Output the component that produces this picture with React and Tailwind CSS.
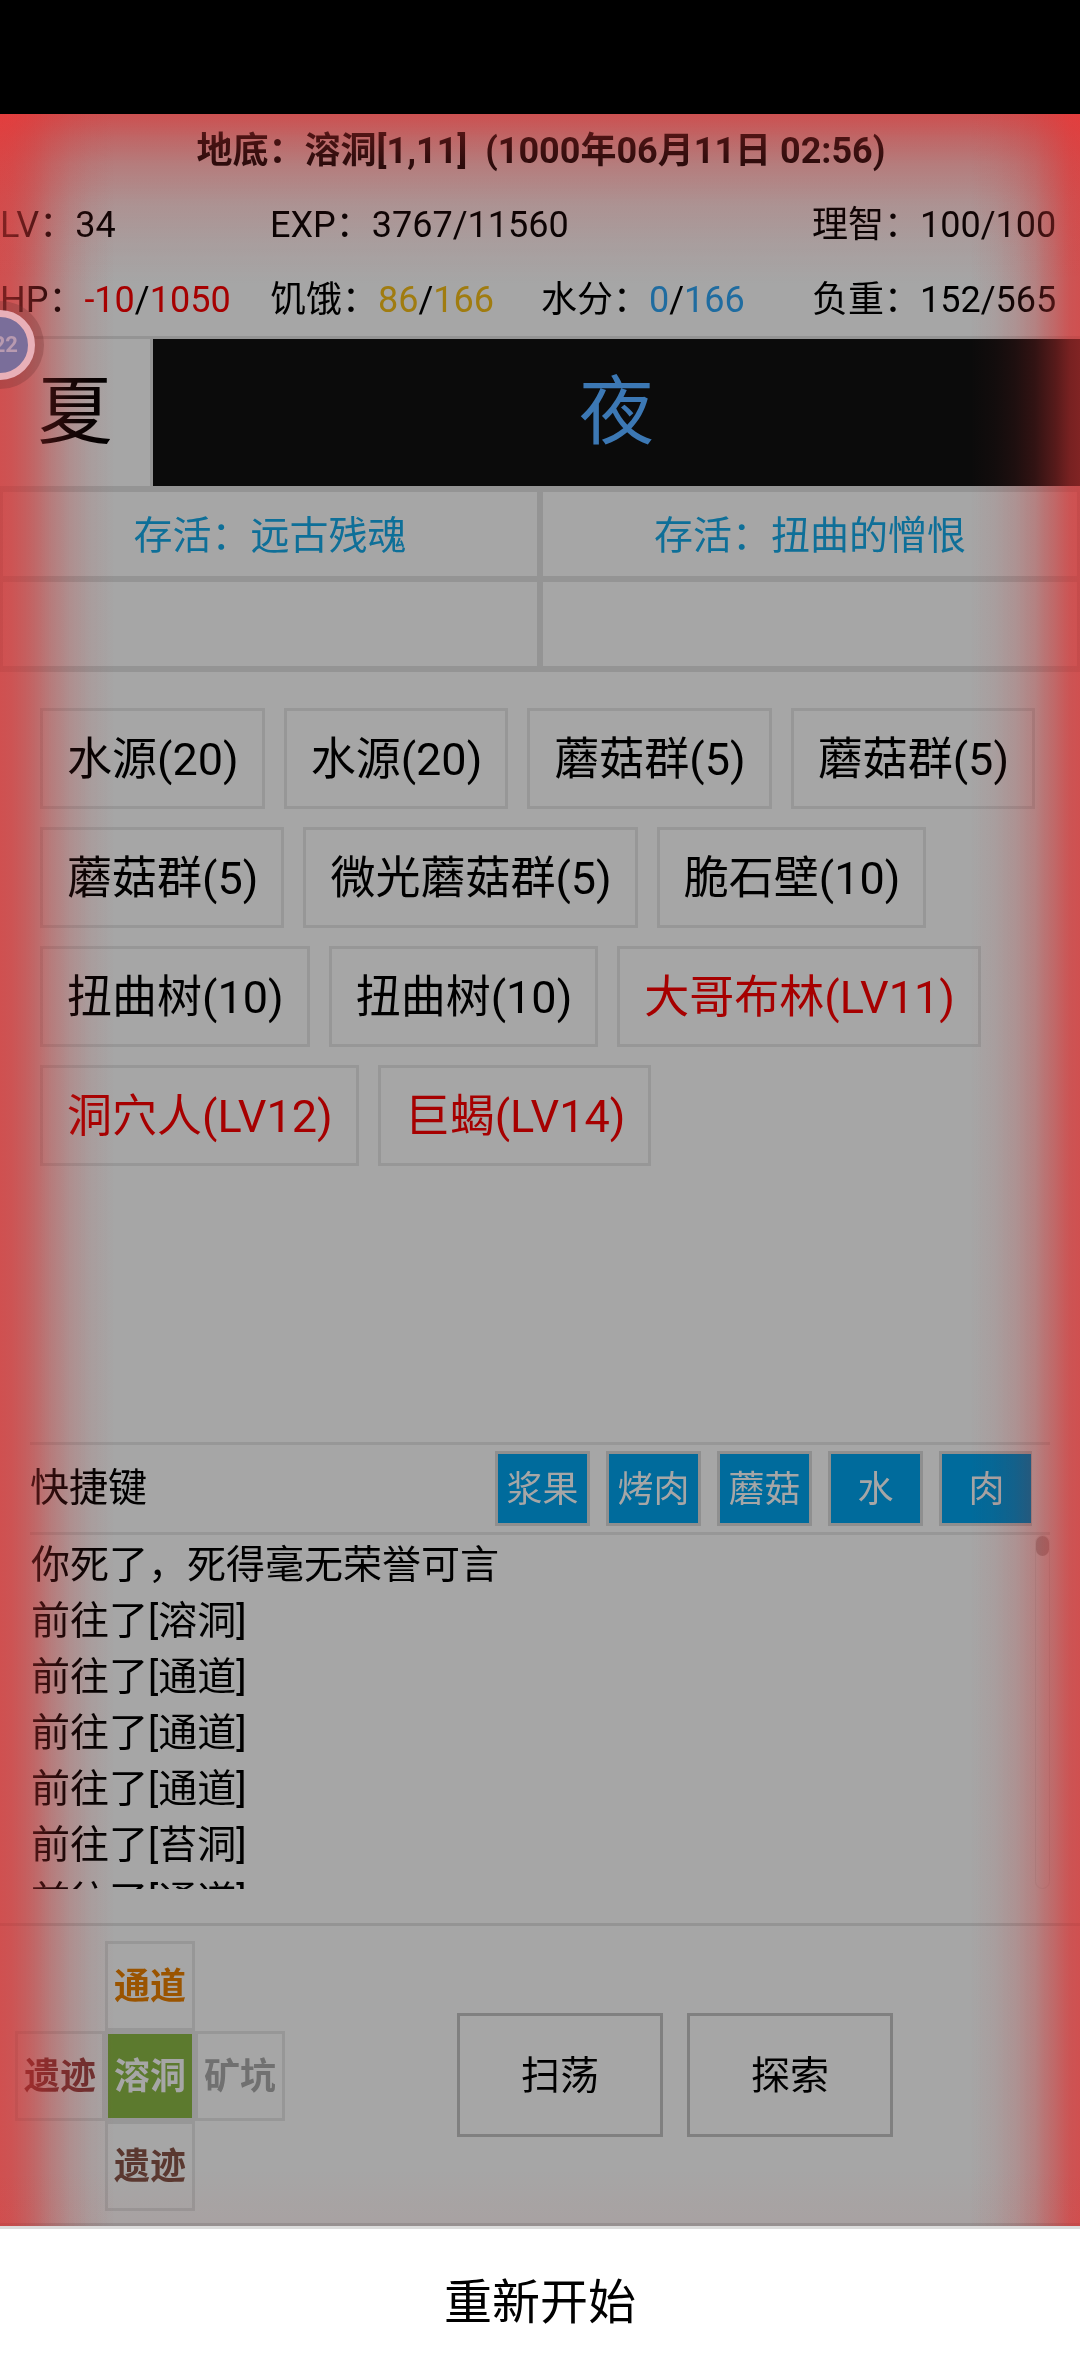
const objects = [
  { label: '水源(20)' },
  { label: '水源(20)' },
  { label: '蘑菇群(5)' },
  { label: '蘑菇群(5)' },
  { label: '蘑菇群(5)' },
  { label: '微光蘑菇群(5)' },
  { label: '脆石壁(10)' },
  { label: '扭曲树(10)' },
  { label: '扭曲树(10)' },
  { label: '大哥布林(LV11)', enemy: true },
  { label: '洞穴人(LV12)', enemy: true },
  { label: '巨蝎(LV14)', enemy: true },
];

const quickKeys = ['浆果', '烤肉', '蘑菇', '水', '肉'];

const logLines = [
  '你死了，死得毫无荣誉可言',
  '前往了[溶洞]',
  '前往了[通道]',
  '前往了[通道]',
  '前往了[通道]',
  '前往了[苔洞]',
  '前往了[通道]',
];

function StatRow({ children }) {
  return <div className="grid h-[75px] grid-cols-[270px_271px_271px_1fr] items-center whitespace-nowrap pt-[3px] text-[36px]">{children}</div>;
}

function MapCell({ className, children }) {
  return (
    <div className={`flex h-[90px] w-[90px] items-center justify-center border-[3px] border-[#979797] pt-[2px] text-[36px] font-bold ${className}`}>
      {children}
    </div>
  );
}

export default function App() {
  return (
    <div className="flex h-[2376px] w-[1080px] flex-col overflow-hidden bg-white font-['Roboto','Noto_Sans_CJK_SC',sans-serif] text-black">
      <div className="h-[114px] shrink-0 bg-black" />

      <div className="relative flex h-[2112px] shrink-0 flex-col bg-[#a6a6a6]">
        <div className="flex h-[72px] items-center justify-center whitespace-pre pl-[2px] pt-[1px] text-[36px] font-bold">
          {'地底：溶洞[1,11]  (1000年06月11日 02:56)'}
        </div>

        <StatRow>
          <span>LV：34</span>
          <span>EXP：3767/11560</span>
          <span />
          <span>理智：100/100</span>
        </StatRow>
        <StatRow>
          <span>
            HP：<span className="text-[#a60000]">-10</span>/<span className="text-[#a60000]">1050</span>
          </span>
          <span>
            饥饿：<span className="text-[#a07c10]">86</span>/<span className="text-[#a07c10]">166</span>
          </span>
          <span>
            水分：<span className="text-[#1f6ca0]">0</span>/<span className="text-[#1f6ca0]">166</span>
          </span>
          <span>负重：152/565</span>
        </StatRow>

        <div className="flex h-[153px] border-y-[3px] border-[#949494]">
          <div className="flex w-[153px] items-center justify-center border-r-[3px] border-[#949494] text-[75px]">夏</div>
          <div className="flex flex-1 items-center justify-center bg-[#0b0b0b] text-[75px] text-[#3c78b4]">夜</div>
        </div>

        <div className="grid grid-cols-2 grid-rows-[90px_90px] border-b-[3px] border-[#949494] text-[39px] text-[#0e6f98]">
          <div className="flex items-center justify-center border-[3px] border-[#949494] pt-[4px]">存活：远古残魂</div>
          <div className="flex items-center justify-center border-[3px] border-[#949494] pt-[4px]">存活：扭曲的憎恨</div>
          <div className="border-[3px] border-[#949494]" />
          <div className="border-[3px] border-[#949494]" />
        </div>

        <div className="h-[770px] px-[40px] pt-[36px]">
          <div className="flex flex-wrap gap-x-[19px] gap-y-[18px]">
            {objects.map((o, i) => (
              <div
                key={i}
                className={`flex h-[101px] items-center border-[3px] border-[#979797] pl-[24px] pr-[23px] pt-[3px] text-[45px] ${o.enemy ? 'text-[#a60000]' : ''}`}
              >
                {o.label}
              </div>
            ))}
          </div>
        </div>

        <div className="mx-[30px] flex h-[93px] items-center justify-between border-y-[3px] border-[#979797] pr-[18px]">
          <span className="text-[39px]">快捷键</span>
          <div className="flex w-[537px] gap-[16px] overflow-hidden">
            {quickKeys.map((k) => (
              <div
                key={k}
                className="flex h-[75px] w-[95px] shrink-0 items-center justify-center border-[3px] border-[#8f8f8f] bg-[#006b9c] pt-[3px] text-[36px] text-[#a6a6a6]"
              >
                {k}
              </div>
            ))}
          </div>
        </div>

        <div className="relative mx-[30px] h-[354px] overflow-hidden pl-[1px] pt-[2px] text-[39px] leading-[56px]">
          {logLines.map((line, i) => (
            <div key={i}>{line}</div>
          ))}
          <div className="absolute right-0 top-0 h-full w-[15px] rounded-full border border-[#9c9c9c]">
            <div className="h-[20px] rounded-full bg-[#8a8080]" />
          </div>
        </div>

        <div className="mt-[34px] flex h-[303px] items-start border-y-[3px] border-[#949494] pl-[15px] pt-[15px]">
          <div className="grid grid-cols-[90px_90px_90px]">
            <span />
            <MapCell className="text-[#9a5400]">通道</MapCell>
            <span />
            <MapCell className="text-[#6a3030]">遗迹</MapCell>
            <MapCell className="bg-[#5c7a2e] text-[#a6a6a6]">溶洞</MapCell>
            <MapCell className="text-[#707070]">矿坑</MapCell>
            <span />
            <MapCell className="text-[#5a3830]">遗迹</MapCell>
            <span />
          </div>
          <div className="ml-[172px] mt-[72px] flex gap-[24px]">
            <div className="flex h-[124px] w-[206px] items-center justify-center border-[3px] border-[#808080] pt-[3px] text-[39px]">扫荡</div>
            <div className="flex h-[124px] w-[206px] items-center justify-center border-[3px] border-[#808080] pt-[3px] text-[39px]">探索</div>
          </div>
        </div>

        {/* red low-hp vignette: multiply keeps darks dark, the normal layer adds the glow */}
        <div className="pointer-events-none absolute inset-y-0 left-0 w-[115px] mix-blend-multiply bg-[linear-gradient(to_right,rgba(255,145,145,1)_0px,rgba(255,145,145,.93)_12px,rgba(255,145,145,.7)_30px,rgba(255,145,145,.4)_50px,rgba(255,145,145,.2)_70px,rgba(255,145,145,.08)_90px,rgba(255,145,145,0)_115px)]" />
        <div className="pointer-events-none absolute inset-y-0 right-0 w-[110px] mix-blend-multiply bg-[linear-gradient(to_left,rgba(255,145,145,1)_0px,rgba(255,145,145,.92)_10px,rgba(255,145,145,.63)_25px,rgba(255,145,145,.33)_45px,rgba(255,145,145,.17)_65px,rgba(255,145,145,.07)_85px,rgba(255,145,145,0)_110px)]" />
        <div className="pointer-events-none absolute inset-x-0 top-0 h-[170px] mix-blend-multiply bg-[linear-gradient(to_bottom,rgba(255,145,145,1)_0px,rgba(255,145,145,.65)_25px,rgba(255,145,145,.4)_50px,rgba(255,145,145,.18)_90px,rgba(255,145,145,.07)_130px,rgba(255,145,145,0)_170px)]" />
        <div className="pointer-events-none absolute inset-y-0 left-0 w-[115px] bg-[linear-gradient(to_right,rgba(251,65,65,.49)_0px,rgba(251,65,65,.46)_12px,rgba(251,65,65,.34)_30px,rgba(251,65,65,.2)_50px,rgba(251,65,65,.1)_70px,rgba(251,65,65,.04)_90px,rgba(251,65,65,0)_115px)]" />
        <div className="pointer-events-none absolute inset-y-0 right-0 w-[110px] bg-[linear-gradient(to_left,rgba(251,65,65,.49)_0px,rgba(251,65,65,.45)_10px,rgba(251,65,65,.31)_25px,rgba(251,65,65,.16)_45px,rgba(251,65,65,.08)_65px,rgba(251,65,65,.03)_85px,rgba(251,65,65,0)_110px)]" />
        <div className="pointer-events-none absolute inset-x-0 top-0 h-[170px] bg-[linear-gradient(to_bottom,rgba(251,65,65,.45)_0px,rgba(251,65,65,.29)_25px,rgba(251,65,65,.18)_50px,rgba(251,65,65,.08)_90px,rgba(251,65,65,.03)_130px,rgba(251,65,65,0)_170px)]" />
        <div className="pointer-events-none absolute inset-x-0 bottom-0 h-[60px] bg-[linear-gradient(to_top,rgba(236,22,28,.03),rgba(236,22,28,0))]" />

        {/* floating ball */}
        <div className="absolute left-[-35px] top-[196px] flex h-[70px] w-[70px] items-center justify-end rounded-full border-[7px] border-[#e8b0b8] bg-[#7a6e9a] pr-[10px] text-[22px] font-bold leading-none text-[#b89ab0] shadow-[0_0_0_9px_rgba(110,50,50,0.3)]">
          22
        </div>
      </div>

      <div className="flex flex-1 items-center justify-center border-t-[3px] border-[#dcdcdc] text-[48px]">重新开始</div>
    </div>
  );
}
